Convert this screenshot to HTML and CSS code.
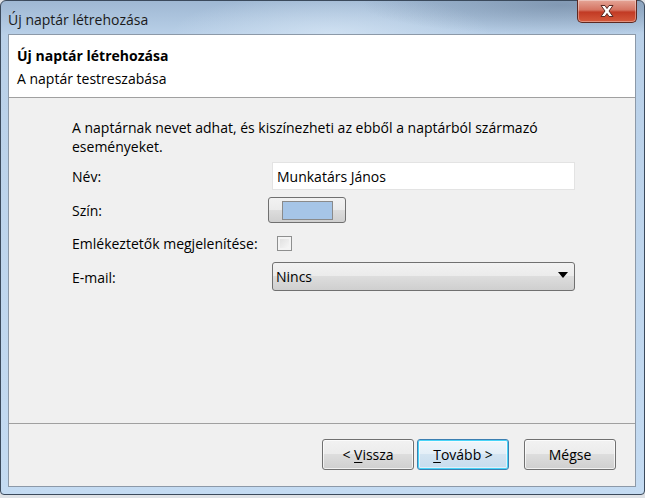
FILE: index.html
```html
<!DOCTYPE html>
<html lang="hu">
<head>
    <meta charset="UTF-8">
    <title>Új naptár létrehozása</title>
    <link rel="stylesheet" href="styles.css">
</head>
<body>
    <div class="window">
        <div class="titlebar">
            <span class="title">Új naptár létrehozása</span>
            <button class="close" aria-label="Bezárás">
                <svg width="18" height="14" viewBox="0 0 18 14">
                    <path d="M3 1.5h4l2 3 2-3h4l-4 5.5 4 5.5h-4l-2-3-2 3H3l4-5.5z" fill="#fff" stroke="#5a2a24" stroke-width="1" stroke-linejoin="round"/>
                </svg>
            </button>
        </div>

        <div class="client">
            <div class="header">
                <div class="header-title">Új naptár létrehozása</div>
                <div class="header-sub">A naptár testreszabása</div>
            </div>

            <div class="content">
                <p class="intro">A naptárnak nevet adhat, és kiszínezheti az ebből a naptárból származó eseményeket.</p>

                <div class="form">
                    <label class="row">
                        <span class="label">Név:</span>
                        <span class="textbox">Munkatárs János</span>
                    </label>
                    <div class="row">
                        <span class="label">Szín:</span>
                        <button class="color-btn"><span class="swatch"></span></button>
                    </div>
                    <label class="row">
                        <span class="label">Emlékeztetők megjelenítése:</span>
                        <span class="checkbox"></span>
                    </label>
                    <div class="row">
                        <span class="label">E-mail:</span>
                        <div class="select">
                            <span>Nincs</span>
                            <span class="arrow"></span>
                        </div>
                    </div>
                </div>
            </div>

            <div class="footer">
                <button class="btn">&lt; <u>V</u>issza</button>
                <button class="btn default"><u>T</u>ovább &gt;</button>
                <button class="btn cancel">Mégse</button>
            </div>
        </div>
    </div>
</body>
</html>
```

FILE: styles.css
```css
body {
    margin: 0;
    background-color: #dfe2e6;
    font-family: "Open Sans", "Noto Sans", sans-serif;
    font-size: 14px;
    color: #000;
}

.window {
    width: 645px;
    height: 495px;
    box-sizing: border-box;
    padding: 0 8px 7px 7px;
    display: flex;
    flex-direction: column;
    border: 1px solid #3b4a5c;
    border-radius: 6px 6px 4px 4px;
    background:
        radial-gradient(ellipse 200px 30px at 560px 4px, rgba(70,90,115,0.35), transparent),
        radial-gradient(ellipse 160px 40px at 330px 32px, rgba(225,238,250,0.55), transparent),
        radial-gradient(ellipse 120px 20px at 760px 494px, rgba(255,255,255,0.5), transparent),
        linear-gradient(to bottom, #9fb8d3 0px, #b9d0e8 34px, #c4dbf2 100%);
}

.titlebar {
    height: 33px;
    flex-shrink: 0;
    display: flex;
    align-items: center;
    position: relative;
}

.title {
    font-size: 14px;
    margin-top: 3px;
    color: #1a1a1a;
}

.close {
    position: absolute;
    top: -1px;
    right: -1px;
    width: 60px;
    height: 23px;
    padding: 0;
    border: 1px solid #5e2820;
    border-top: none;
    border-radius: 0 0 5px 5px;
    background: linear-gradient(to bottom, #e5a597 0%, #d57462 45%, #c23a24 55%, #d55a3c 100%);
    box-shadow: inset 0 0 0 1px rgba(255,255,255,0.35);
    display: flex;
    align-items: center;
    justify-content: center;
}

.client {
    flex: 1;
    display: flex;
    flex-direction: column;
    border: 1px solid #8c99a8;
    background-color: #f0f0f0;
}

.header {
    height: 63px;
    box-sizing: border-box;
    background-color: #fff;
    border-bottom: 1px solid #a0a0a0;
    padding: 10px 8px 0;
    line-height: 22px;
}

.header-title {
    font-weight: bold;
}

.header-sub {
    margin-top: 1px;
}

.content {
    flex: 1;
    padding: 20px 0 0 63px;
    border-bottom: 1px solid #a0a0a0;
}

.intro {
    margin: 0;
    width: 490px;
    line-height: 19px;
}

.form {
    margin-top: 6px;
    display: flex;
    flex-direction: column;
    gap: 7px;
}

.row {
    display: flex;
    align-items: center;
    min-height: 26px;
}

.label {
    width: 200px;
    flex-shrink: 0;
}

.textbox {
    width: 303px;
    height: 28px;
    box-sizing: border-box;
    padding-left: 4px;
    display: flex;
    align-items: center;
    background-color: #fff;
    border: 1px solid #e3e3e3;
}

.color-btn {
    margin-left: -4px;
    width: 78px;
    height: 26px;
    padding: 0;
    border: 1px solid #707070;
    border-radius: 3px;
    background: linear-gradient(to bottom, #f2f2f2 0%, #ebebeb 50%, #dddddd 50%, #cfcfcf 100%);
    display: flex;
    align-items: center;
    justify-content: center;
}

.swatch {
    width: 51px;
    height: 19px;
    background-color: #a6c5e7;
    border: 1px solid #8a8a8a;
    box-sizing: border-box;
}

.checkbox {
    margin-left: 5px;
    width: 15px;
    height: 15px;
    box-sizing: border-box;
    border: 1px solid #8e8f8f;
    background: linear-gradient(135deg, #dcdcdc, #fbfbfb);
    box-shadow: inset 0 0 0 2px #f4f4f4;
}

.select {
    width: 303px;
    height: 29px;
    box-sizing: border-box;
    padding: 0 6px 0 3px;
    margin-top: -1px;
    display: flex;
    align-items: center;
    justify-content: space-between;
    border: 1px solid #707070;
    border-radius: 3px;
    background: linear-gradient(to bottom, #f2f2f2 0%, #ebebeb 50%, #dddddd 50%, #cfcfcf 100%);
}

.arrow {
    width: 0;
    height: 0;
    border-left: 5px solid transparent;
    border-right: 5px solid transparent;
    border-top: 6px solid #000;
    margin-bottom: 3px;
}

.footer {
    height: 62px;
    box-sizing: border-box;
    padding: 15px 19px 0 0;
    display: flex;
    justify-content: flex-end;
    align-items: flex-start;
}

.btn {
    width: 92px;
    height: 31px;
    margin-left: 3px;
    font-family: inherit;
    font-size: 14px;
    color: #000;
    border: 1px solid #707070;
    border-radius: 3px;
    background: linear-gradient(to bottom, #f2f2f2 0%, #ebebeb 50%, #dddddd 50%, #cfcfcf 100%);
    box-shadow: inset 0 0 0 1px rgba(255,255,255,0.7);
}

.btn u {
    text-decoration-thickness: 1px;
    text-underline-offset: 2px;
}

.btn.default {
    border-color: #3c7fb1;
    box-shadow: inset 0 0 0 1px #48d4f8, inset 0 0 0 2px rgba(255,255,255,0.5);
    background: linear-gradient(to bottom, #f0f6fa 0%, #e3eef7 50%, #d3e4f1 50%, #c6dcee 100%);
}

.btn.cancel {
    margin-left: 15px;
}
```
